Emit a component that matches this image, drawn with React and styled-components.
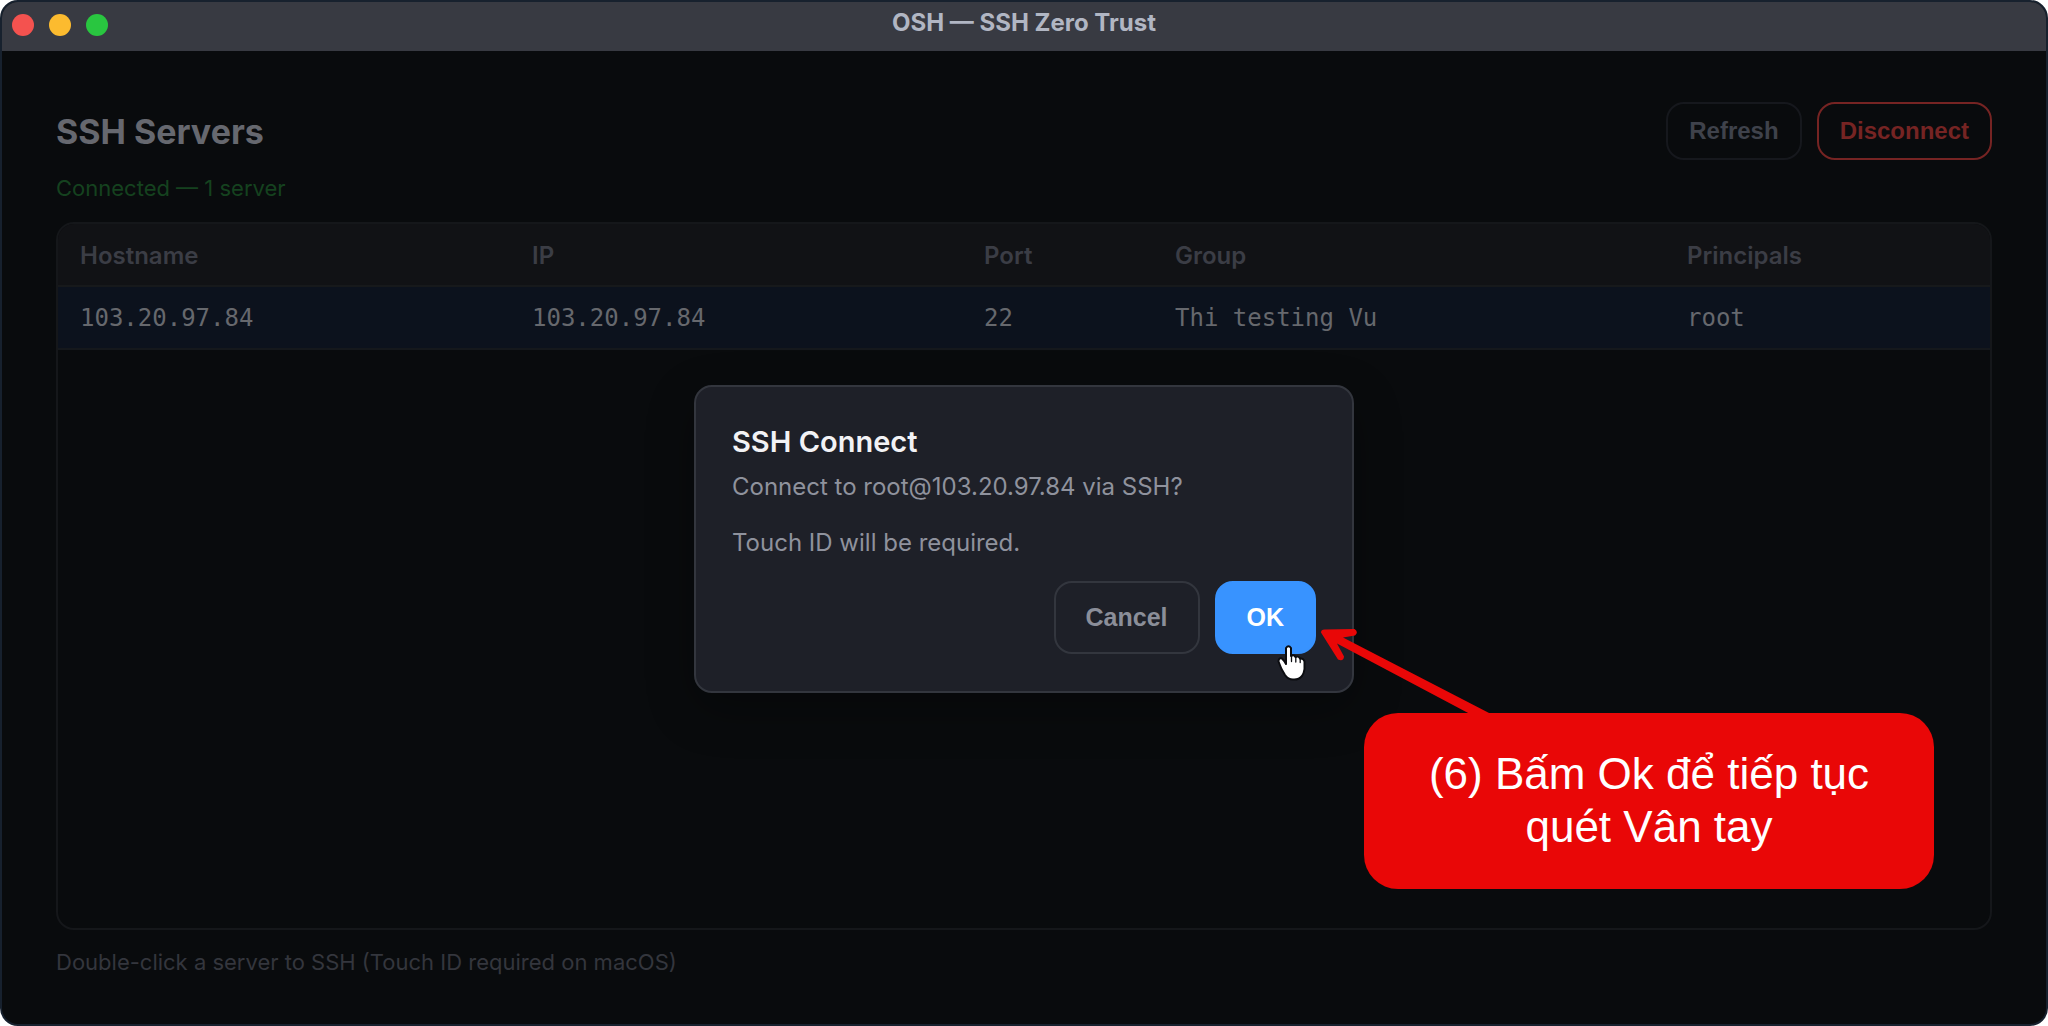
import React from "react";
import styled, { createGlobalStyle } from "styled-components";

const GlobalStyle = createGlobalStyle`
  *, *::before, *::after { box-sizing: border-box; }
  html, body { margin: 0; background: #ffffff; }
  body { font-family: Inter, "Noto Sans", sans-serif; -webkit-font-smoothing: antialiased; }
  h1, h2, p { margin: 0; }
`;

const Window = styled.div`
  position: relative;
  display: flex;
  flex-direction: column;
  height: 100vh;
  border: 2px solid #17212e;
  border-radius: 18px;
  background: #090b0d;
  overflow: hidden;
`;

const TitleBar = styled.header`
  display: grid;
  grid-template-columns: 1fr auto 1fr;
  height: 49px;
  padding: 0 10px;
  background: #383a42;
`;

const Lights = styled.div`
  display: flex;
  gap: 15px;
  padding-top: 12px;
`;

const Light = styled.span`
  width: 22px;
  height: 22px;
  border-radius: 50%;
  background: ${(p) => p.$color};
`;

const WindowTitle = styled.div`
  font-size: 24px;
  line-height: 42px;
  font-weight: 700;
  color: #b1b6c3;
`;

const Main = styled.main`
  flex: 1;
  display: flex;
  flex-direction: column;
  min-height: 0;
  padding: 51px 54px 46px;
`;

const PageHead = styled.div`
  display: flex;
  align-items: center;
  justify-content: space-between;
`;

const PageTitle = styled.h1`
  padding-top: 2px;
  font-size: 34px;
  line-height: 56px;
  font-weight: 700;
  color: #66686f;
`;

const Actions = styled.div`
  display: flex;
  gap: 15px;
`;

const OutlineButton = styled.button`
  height: 58px;
  padding: 0 21px;
  border: 2px solid ${(p) => (p.$danger ? "#762423" : "#16181d")};
  border-radius: 18px;
  background: transparent;
  color: ${(p) => (p.$danger ? "#762423" : "#3f424b")};
  font: 700 24px "Liberation Sans", Arial, sans-serif;
`;

const Status = styled.p`
  margin-top: 12px;
  font-size: 22px;
  line-height: 32px;
  color: #15421f;
`;

const TableFrame = styled.div`
  flex: 1;
  margin-top: 18px;
  border: 2px solid #15171a;
  border-radius: 18px;
  overflow: hidden;
`;

const Table = styled.table`
  width: 100%;
  table-layout: fixed;
  border-collapse: collapse;
  text-align: left;
`;

const Col = styled.col`
  width: ${(p) => p.$width};
`;

const HeadCell = styled.th`
  height: 62px;
  padding: 2px 22px 0;
  border-bottom: 2px solid #17191b;
  background: #111215;
  color: #3b3d45;
  font-size: 24px;
  font-weight: 600;
`;

const Cell = styled.td`
  height: 63px;
  padding: 0 22px;
  border-bottom: 2px solid #15181c;
  background: #0c121d;
  color: #66686d;
  font: 24px "DejaVu Sans Mono", monospace;
`;

const Hint = styled.p`
  margin-top: 16px;
  font-size: 22px;
  line-height: 32px;
  color: #34363d;
`;

const Overlay = styled.div`
  position: absolute;
  inset: 51px 0 0;
  display: flex;
  align-items: center;
  justify-content: center;
`;

const Dialog = styled.section`
  width: 660px;
  padding: 35px 36px 37px;
  border: 2px solid #33363e;
  border-radius: 18px;
  background: #1e2028;
  box-shadow: 0 16px 48px rgba(0, 0, 0, 0.3);
`;

const DialogTitle = styled.h2`
  font-size: 29px;
  line-height: 40px;
  font-weight: 600;
  color: #f2f2f5;
`;

const Message = styled.p`
  margin-top: 11px;
  font-size: 24px;
  line-height: 28px;
  white-space: pre-line;
  color: #8f929d;
`;

const DialogActions = styled.div`
  display: flex;
  justify-content: flex-end;
  gap: 15px;
  margin-top: 24px;
`;

const DialogButton = styled.button`
  height: 73px;
  padding: 0 30px;
  border: 2px solid ${(p) => (p.$primary ? "#3893ff" : "#33363e")};
  border-radius: 18px;
  background: ${(p) => (p.$primary ? "#3893ff" : "transparent")};
  color: ${(p) => (p.$primary ? "#ffffff" : "#8b8e99")};
  font: 700 25px "Liberation Sans", Arial, sans-serif;
`;

const Annotation = styled.aside`
  position: absolute;
  right: 112px;
  bottom: 135px;
  width: 570px;
  padding: 34px 40px 36px;
  border-radius: 34px;
  background: #e90707;
  color: #ffffff;
  font: 44px/53px "Liberation Sans", Arial, sans-serif;
  text-align: center;
`;

const Arrow = styled.svg`
  position: absolute;
  left: -44px;
  top: -85px;
  width: 172px;
  height: 88px;
`;

const Pointer = styled.svg`
  position: absolute;
  left: -88px;
  top: -70px;
  width: 32px;
  height: 40px;
`;

const columns = [
  { name: "Hostname", width: "452px" },
  { name: "IP", width: "452px" },
  { name: "Port", width: "191px" },
  { name: "Group", width: "512px" },
  { name: "Principals", width: "auto" },
];

const servers = [["103.20.97.84", "103.20.97.84", "22", "Thi testing Vu", "root"]];

export default function App() {
  return (
    <>
      <GlobalStyle />
      <Window>
        <TitleBar>
          <Lights>
            <Light $color="#f4524f" />
            <Light $color="#fcbb2f" />
            <Light $color="#29c640" />
          </Lights>
          <WindowTitle>OSH — SSH Zero Trust</WindowTitle>
        </TitleBar>
        <Main>
          <PageHead>
            <PageTitle>SSH Servers</PageTitle>
            <Actions>
              <OutlineButton type="button">Refresh</OutlineButton>
              <OutlineButton type="button" $danger>Disconnect</OutlineButton>
            </Actions>
          </PageHead>
          <Status>Connected — 1 server</Status>
          <TableFrame>
            <Table>
              <colgroup>
                {columns.map((c) => <Col key={c.name} $width={c.width} />)}
              </colgroup>
              <thead>
                <tr>{columns.map((c) => <HeadCell key={c.name} scope="col">{c.name}</HeadCell>)}</tr>
              </thead>
              <tbody>
                {servers.map((row) => (
                  <tr key={row[0]}>{row.map((v, i) => <Cell key={i}>{v}</Cell>)}</tr>
                ))}
              </tbody>
            </Table>
          </TableFrame>
          <Hint>Double-click a server to SSH (Touch ID required on macOS)</Hint>
        </Main>
        <Overlay>
          <Dialog role="dialog" aria-modal="true" aria-labelledby="dialog-title">
            <DialogTitle id="dialog-title">SSH Connect</DialogTitle>
            <Message>{"Connect to root@103.20.97.84 via SSH?\n\nTouch ID will be required."}</Message>
            <DialogActions>
              <DialogButton type="button">Cancel</DialogButton>
              <DialogButton type="button" $primary>OK</DialogButton>
            </DialogActions>
          </Dialog>
        </Overlay>
        <Annotation>
          <Arrow viewBox="0 0 172 88" aria-hidden="true">
            <path
              fill="#e90707"
              d="M1 4.500 Q1 1.500 4.500 1.500 L34.500 1 Q39 4 35 7.500 L23 9.500 L171 86 H150 L17 15.500 L24 28.500 Q23.500 34 18 31.500 Z"
            />
          </Arrow>
          <Pointer viewBox="0 0 32 40" aria-hidden="true">
            <path
              fill="#ffffff"
              stroke="#0b0c10"
              strokeWidth="2"
              strokeLinejoin="round"
              d="M10 5 Q12.500 1.500 15 5 V13 Q18 11 19.500 14 Q22.500 12.500 24 15.500 Q27.500 15 28.500 18.500 V26 Q28 30 26 33 Q22.500 37 17 36.500 Q12 36.500 9 32 L5.500 26 L2.500 18.500 Q2.500 14.500 6 15.500 Q8.500 18 10 21 Z"
            />
            <path
              fill="none"
              stroke="#0b0c10"
              strokeWidth="1.300"
              strokeLinecap="round"
              d="M15.500 12 V18.500 M19.800 14 V19 M24.200 15.500 V19.500"
            />
          </Pointer>
          (6) Bấm Ok để tiếp tục quét Vân tay
        </Annotation>
      </Window>
    </>
  );
}
